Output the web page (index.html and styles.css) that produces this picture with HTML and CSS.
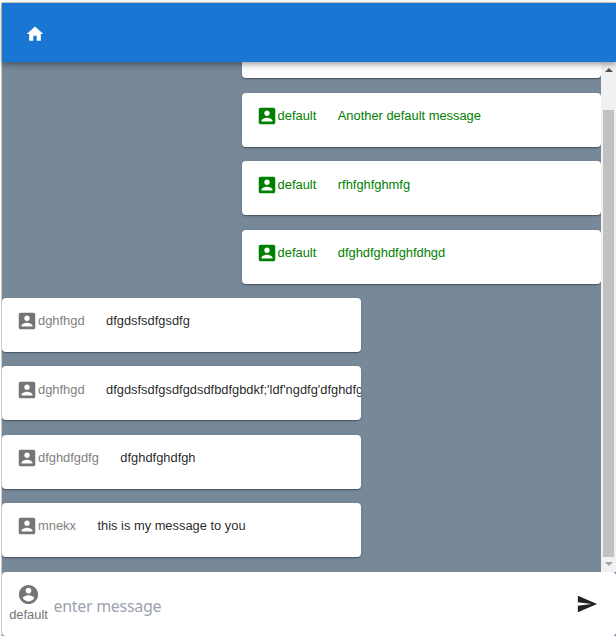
FILE: index.html
```html
<!DOCTYPE html>
<html lang="en">
<head>
<meta charset="utf-8">
<title>Chat</title>
<link rel="stylesheet" href="styles.css">
</head>
<body>
<svg class="sprite" aria-hidden="true">
  <symbol id="account-box" viewBox="0 0 24 24"><path d="M3 5v14c0 1.1.89 2 2 2h14c1.1 0 2-.9 2-2V5c0-1.1-.9-2-2-2H5c-1.11 0-2 .9-2 2zm12 4c0 1.66-1.34 3-3 3s-3-1.34-3-3 1.34-3 3-3 3 1.34 3 3zm-9 8c0-2 4-3.1 6-3.1s6 1.1 6 3.1v1H6v-1z"/></symbol>
</svg>
<div class="app">
  <header class="bar">
    <svg class="home" viewBox="0 0 24 24"><path d="M10 20v-6h4v6h5v-8h3L12 3 2 12h3v8z"/></svg>
  </header>
  <main class="chat">
    <div class="messages">
      <article class="card mine"></article>
      <article class="card mine"><svg class="avatar"><use href="#account-box"/></svg><span class="name">default</span><span class="text">Another default message</span></article>
      <article class="card mine"><svg class="avatar"><use href="#account-box"/></svg><span class="name">default</span><span class="text">rfhfghfghmfg</span></article>
      <article class="card mine"><svg class="avatar"><use href="#account-box"/></svg><span class="name">default</span><span class="text">dfghdfghdfghfdhgd</span></article>
      <article class="card"><svg class="avatar"><use href="#account-box"/></svg><span class="name">dghfhgd</span><span class="text">dfgdsfsdfgsdfg</span></article>
      <article class="card"><svg class="avatar"><use href="#account-box"/></svg><span class="name">dghfhgd</span><span class="text">dfgdsfsdfgsdfgdsdfbdfgbdkf;'ldf'ngdfg'dfghdfg</span></article>
      <article class="card"><svg class="avatar"><use href="#account-box"/></svg><span class="name">dfghdfgdfg</span><span class="text">dfghdfghdfgh</span></article>
      <article class="card"><svg class="avatar"><use href="#account-box"/></svg><span class="name">mnekx</span><span class="text">this is my message to you</span></article>
    </div>
    <div class="scrollbar">
      <svg class="arrow up" viewBox="0 0 8 4"><path d="M0 4 4 0l4 4z"/></svg>
      <div class="thumb"></div>
      <svg class="arrow down" viewBox="0 0 8 4"><path d="M0 0h8L4 4z"/></svg>
    </div>
  </main>
  <footer class="composer">
    <div class="user">
      <svg class="face" viewBox="0 0 24 24"><path d="M12 2C6.48 2 2 6.48 2 12s4.48 10 10 10 10-4.48 10-10S17.52 2 12 2zm0 3c1.66 0 3 1.34 3 3s-1.34 3-3 3-3-1.34-3-3 1.34-3 3-3zm0 14.200c-2.500 0-4.710-1.280-6-3.220.030-1.990 4-3.080 6-3.080 1.990 0 5.970 1.090 6 3.080-1.290 1.940-3.500 3.220-6 3.220z"/></svg>
      <span>default</span>
    </div>
    <input class="entry" type="text" placeholder="enter message">
    <svg class="send" viewBox="0 0 24 24"><path d="M2.010 21 23 12 2.010 3 2 10l15 2-15 2z"/></svg>
  </footer>
</div>
</body>
</html>
```
FILE: styles.css
```css
* { box-sizing: border-box; }
body {
  margin: 0;
  height: 636px;
  overflow: hidden;
  padding: 2px 0 0 1px;
  background: #fff;
  font: 12.88px/20px "Liberation Sans", Arial, sans-serif;
}
svg { display: block; flex: none; fill: currentColor; }
.sprite { position: absolute; width: 0; height: 0; }
.app {
  display: flex;
  flex-direction: column;
  height: 634px;
  border-top: 1px solid #d3d0cc;
  border-left: 1px solid #ccc;
  background: #778899;
}
.bar {
  position: relative;
  z-index: 1;
  flex: none;
  height: 59px;
  padding: 21px 0 0 22.5px;
  background: #1976d2;
  color: #fff;
  box-shadow: 0 2px 4px -1px rgba(0,0,0,.2), 0 4px 5px rgba(0,0,0,.14), 0 1px 10px rgba(0,0,0,.12);
}
.home { width: 20px; height: 20px; }
.chat { display: flex; height: 510px; flex: none; overflow: hidden; }
.messages {
  flex: 1;
  min-width: 0;
  display: flex;
  flex-direction: column;
  justify-content: flex-end;
  gap: 14.33px;
  padding-bottom: 15px;
  overflow: hidden;
}
.card {
  display: flex;
  flex: none;
  width: 359px;
  height: 54px;
  padding: 12.2px 0 0 14px;
  border-radius: 4px;
  overflow: hidden;
  white-space: nowrap;
  background: #fff;
  color: rgba(0,0,0,.87);
  box-shadow: 0 2px 1px -1px rgba(0,0,0,.2), 0 1px 1px rgba(0,0,0,.14), 0 1px 3px rgba(0,0,0,.12);
}
.card:first-child { margin-bottom: .4px; }
.avatar { width: 22px; height: 22px; color: #757575; }
.name { margin-right: 21.500px; color: #808080; }
.name, .text { line-height: 22px; }
.mine { align-self: flex-end; }
.mine, .mine .avatar, .mine .name { color: #008000; }
.mine .name { margin-left: -.4px; }
.scrollbar {
  display: flex;
  flex-direction: column;
  align-items: center;
  width: 15px;
  background: #f1f1f1;
}
.arrow { width: 8px; height: 4px; }
.up { margin: 6px 0 38px; color: #505050; }
.thumb { width: 11px; height: 447px; background: #c1c1c1; }
.down { margin-top: 5px; color: #a3a3a3; }
.composer {
  display: flex;
  flex: 1;
  border-radius: 4px;
  background: #fff;
}
.user {
  display: flex;
  flex-direction: column;
  align-items: center;
  width: 51.5px;
  padding: 11.4px 0 0 1.5px;
  color: #757575;
}
.user span { line-height: 18px; }
.face { width: 23px; height: 23px; }
.entry {
  flex: 1;
  min-width: 0;
  height: 24px;
  margin-top: 22px;
  padding: 0;
  border: 0;
  outline: 0;
  background: none;
  font: 16px/24px "Noto Sans", sans-serif;
  letter-spacing: -.3px;
}
.entry::placeholder { color: #9ca3af; opacity: 1; }
.send { width: 22px; height: 22px; margin: 21px 18px 0 0; color: #212121; }
```
